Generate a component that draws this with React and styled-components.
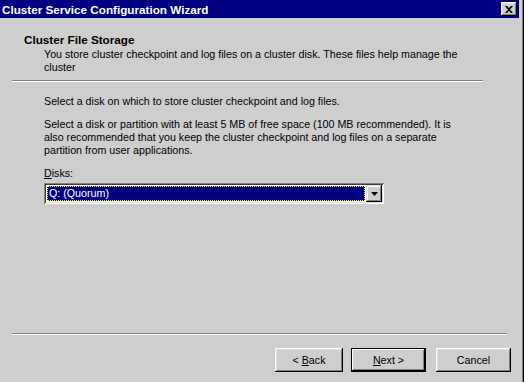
import React from 'react';
import styled, { createGlobalStyle } from 'styled-components';

const GlobalStyle = createGlobalStyle`
  html, body {
    margin: 0;
    padding: 0;
    background: #cecece;
  }
  body {
    font-family: 'Liberation Sans', Arial, sans-serif;
    font-size: 10.7px;
    color: #000;
  }
`;

const App = () => {
  return (
    <>
      <GlobalStyle />
      <Window>
        <TitleBar>
          <span>Cluster Service Configuration Wizard</span>
          <CloseButton>
            <svg width="8" height="7" viewBox="0 0 8 7">
              <path d="M0 0h2l2 2 2-2h2L5 3.5 8 7H6L4 5 2 7H0l3-3.5z" fill="#000" />
            </svg>
          </CloseButton>
        </TitleBar>
        <Header>
          <HeaderTitle>Cluster File Storage</HeaderTitle>
          <HeaderText>
            You store cluster checkpoint and log files on a cluster disk. These files help manage the
            cluster
          </HeaderText>
        </Header>
        <Separator $right={37} />
        <Body>
          <Para>Select a disk on which to store cluster checkpoint and log files.</Para>
          <Para>
            Select a disk or partition with at least 5 MB of free space (100 MB recommended). It is
            also recommended that you keep the cluster checkpoint and log files on a separate
            partition from user applications.
          </Para>
          <Label>
            <u>D</u>isks:
          </Label>
          <Combo>
            <ComboValue>
              <span>Q: (Quorum)</span>
            </ComboValue>
            <ComboArrow>
              <svg width="7" height="4" viewBox="0 0 7 4">
                <path d="M0 0h7L3.5 4z" fill="#000" />
              </svg>
            </ComboArrow>
          </Combo>
        </Body>
        <Separator $right={13} />
        <Footer>
          <Button $width={68}>
            {'< '}
            <u>B</u>ack
          </Button>
          <Button $default>
            <u>N</u>ext{' >'}
          </Button>
          <Button>Cancel</Button>
        </Footer>
      </Window>
    </>
  );
};

export default App;

const Window = styled.div`
  width: 524px;
  height: 382px;
  box-sizing: border-box;
  display: flex;
  flex-direction: column;
  padding-right: 4px;
  box-shadow: inset -1px 0 #000, inset -2px 0 #808080;
  overflow: hidden;
`;

const TitleBar = styled.div`
  height: 18px;
  margin-right: 1px;
  background: #000080;
  color: #fff;
  font-weight: bold;
  font-size: 11.7px;
  display: flex;
  align-items: center;
  justify-content: space-between;
  padding: 0 2px 0 2px;
  flex-shrink: 0;
`;

const CloseButton = styled.div`
  width: 16px;
  height: 14px;
  box-sizing: border-box;
  background: #cecece;
  display: flex;
  align-items: center;
  justify-content: center;
  box-shadow: inset -1px -1px #000, inset 1px 1px #fff, inset -2px -2px #808080,
    inset 2px 2px #dfdfdf;
`;

const Header = styled.div`
  padding: 13px 0 0 24px;
  height: 62px;
  box-sizing: border-box;
`;

const HeaderTitle = styled.div`
  font-weight: bold;
  font-size: 11.7px;
  line-height: 17px;
`;

const HeaderText = styled.div`
  padding-left: 20px;
  padding-right: 50px;
  line-height: 13px;
`;

const Separator = styled.div`
  height: 0;
  margin: 0 ${(p) => p.$right}px 0 12px;
  border-top: 1px solid #808080;
  border-bottom: 1px solid #fff;
  flex-shrink: 0;
`;

const Body = styled.div`
  flex: 1;
  padding: 13px 56px 0 44px;
  display: flex;
  flex-direction: column;
`;

const Para = styled.p`
  margin: 0 0 10px 0;
  line-height: 13px;
`;

const Label = styled.div`
  line-height: 13px;
  margin-bottom: 3px;
`;

const Combo = styled.div`
  width: 340px;
  height: 21px;
  box-sizing: border-box;
  background: #fff;
  display: flex;
  padding: 2px;
  box-shadow: inset 1px 1px #808080, inset -1px -1px #fff, inset 2px 2px #404040,
    inset -2px -2px #dfdfdf;
`;

const ComboValue = styled.div`
  flex: 1;
  padding: 1px;
  display: flex;
  span {
    flex: 1;
    background: #000080;
    color: #fff;
    outline: 1px dotted #ffff00;
    outline-offset: -1px;
    padding-left: 2px;
    line-height: 15px;
  }
`;

const ComboArrow = styled.div`
  width: 16px;
  box-sizing: border-box;
  background: #cecece;
  display: flex;
  align-items: center;
  justify-content: center;
  box-shadow: inset -1px -1px #000, inset 1px 1px #dfdfdf, inset -2px -2px #808080,
    inset 2px 2px #fff;
`;

const Footer = styled.div`
  height: 47px;
  box-sizing: border-box;
  display: flex;
  justify-content: flex-end;
  align-items: flex-start;
  padding: 13px 9px 0 0;
  gap: 8px;
  & > :last-child {
    margin-left: 2px;
  }
`;

const Button = styled.div`
  width: ${(p) => p.$width || 75}px;
  height: 24px;
  box-sizing: border-box;
  background: #cecece;
  display: flex;
  align-items: center;
  justify-content: center;
  white-space: pre;
  box-shadow: ${(p) =>
    p.$default
      ? 'inset 0 0 0 1px #000, inset -2px -2px #000, inset 2px 2px #fff, inset -3px -3px #808080'
      : 'inset -1px -1px #000, inset 1px 1px #fff, inset -2px -2px #808080, inset 2px 2px #dfdfdf'};
`;
